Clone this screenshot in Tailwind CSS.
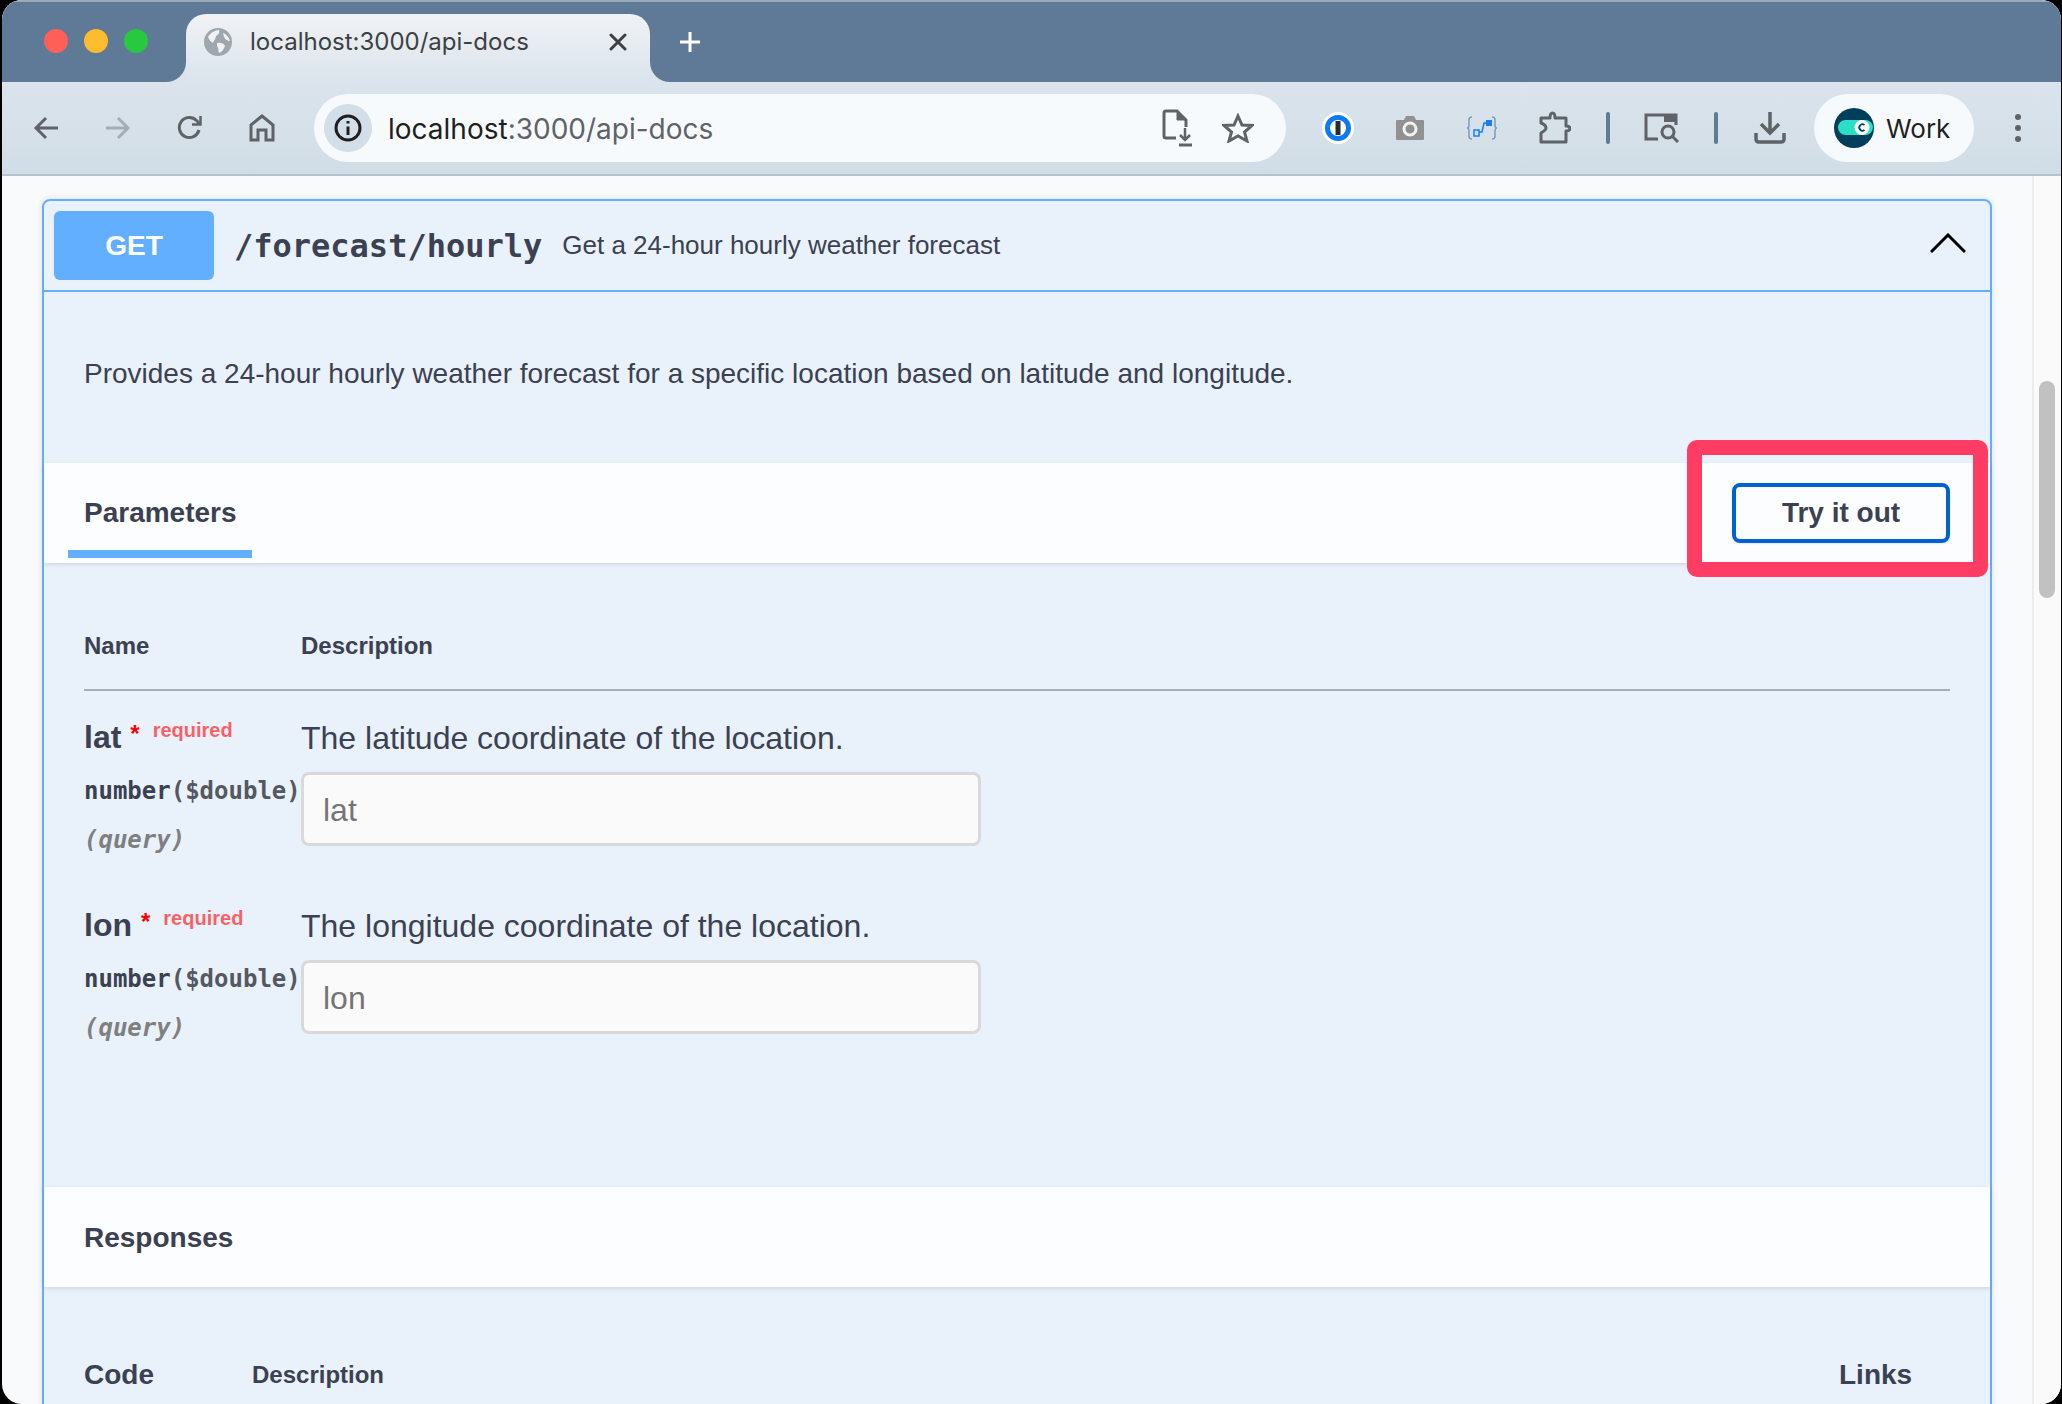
<!DOCTYPE html>
<html lang="en">
<head>
  <meta charset="UTF-8">
  <title>localhost:3000/api-docs</title>
  <script src="https://cdn.jsdelivr.net/npm/@tailwindcss/browser@4"></script>
</head>
<body class="bg-black w-[2062px] h-[1404px] overflow-hidden font-['Liberation_Sans',sans-serif] text-[#3b4151]">
  <div class="ml-[2px] mr-px h-[1404px] rounded-t-[20px] rounded-b-[20px] overflow-hidden flex flex-col bg-[#f9fafc]">

    <!-- tab strip -->
    <div class="h-[82px] flex shrink-0 bg-[#dbe4ec] font-['Inter',sans-serif]">
      <div class="w-[184px] bg-[#5f7a96] border-t-2 border-[#9aa9b8] rounded-br-[20px] flex items-start pt-[27px] pl-[42px] gap-[16px]">
        <span class="w-6 h-6 rounded-full bg-[#ff5f57]"></span>
        <span class="w-6 h-6 rounded-full bg-[#febc2e]"></span>
        <span class="w-6 h-6 rounded-full bg-[#28c840]"></span>
      </div>
      <div class="w-[464px] bg-[#5f7a96] border-t-2 border-[#9aa9b8] pt-[12px]">
        <div class="h-[68px] rounded-t-[20px] bg-linear-to-b from-[#f0f2f5] to-[#dbe4ec] flex items-start pt-[14px] pl-[18px]">
          <svg width="28" height="28" viewBox="0 0 28 28" class="shrink-0">
            <circle cx="14" cy="14" r="14" fill="#a0a6ad"/>
            <path d="M4 9 C7 4 12 2 15 2 C16 5 14 7 12 8 C12 11 9 13 9 15 C7 14 5 12 4 9Z M13 15 C16 14 20 15 21 18 C20 21 18 24 15 25 C14 22 15 20 13 18Z M19 5 C22 6 25 9 26 13 C23 13 20 11 19 5Z" fill="#f0f2f5"/>
          </svg>
          <span class="ml-[18px] text-[24px] leading-[28px] text-[#3c4043]">localhost:3000/api-docs</span>
          <svg width="18" height="18" viewBox="0 0 18 18" class="ml-auto mr-[23px] mt-[5px]">
            <path d="M2 2 L16 16 M16 2 L2 16" stroke="#3c4043" stroke-width="3" stroke-linecap="round"/>
          </svg>
        </div>
      </div>
      <div class="flex-1 bg-[#5f7a96] border-t-2 border-[#9aa9b8] rounded-bl-[20px] pl-[30px] pt-[30px]">
        <svg width="20" height="20" viewBox="0 0 20 20">
          <path d="M10 0 V20 M0 10 H20" stroke="#ffffff" stroke-width="3"/>
        </svg>
      </div>
    </div>

    <!-- toolbar -->
    <div class="h-[94px] shrink-0 flex items-center pl-[8px] bg-linear-to-b from-[#dbe4ec] to-[#d1dde6] border-b-2 border-[#b5c1cb] font-['Inter',sans-serif]">
      <div class="w-[72px] flex justify-center">
        <svg width="26" height="24" viewBox="0 0 26 24" fill="none" stroke="#5f6368" stroke-width="3"><path d="M25 12 H3 M13 2 L3 12 L13 22"/></svg>
      </div>
      <div class="w-[72px] flex justify-center">
        <svg width="26" height="24" viewBox="0 0 26 24" fill="none" stroke="#a4adb6" stroke-width="3"><path d="M1 12 H23 M13 2 L23 12 L13 22"/></svg>
      </div>
      <div class="w-[72px] flex justify-center">
        <svg width="26" height="26" viewBox="0 0 26 26" fill="none" stroke="#5f6368" stroke-width="3"><path d="M22 15 A10 10 0 1 1 19.5 5.5 L23 9"/><path d="M23.5 1 V9.5 H15" stroke-width="2.5"/></svg>
      </div>
      <div class="w-[72px] flex justify-center">
        <svg width="26" height="28" viewBox="0 0 26 28" fill="none" stroke="#5f6368" stroke-width="3"><path d="M2 26 V11 L13 2 L24 11 V26 H17 V16 H9 V26 Z"/></svg>
      </div>

      <div class="ml-[16px] w-[972px] h-[68px] rounded-full bg-[#f7fafc] flex items-center pl-[10px]">
        <div class="w-[48px] h-[48px] rounded-full bg-[#d3dfe8] flex items-center justify-center shrink-0">
          <svg width="28" height="28" viewBox="0 0 28 28" fill="none" stroke="#1f1f1f" stroke-width="3">
            <circle cx="14" cy="14" r="12"/><path d="M14 12.5 V21" /><path d="M14 7 V9.5"/>
          </svg>
        </div>
        <span class="ml-[16px] mt-px text-[28px] leading-[34px] text-[#1f1f1f]">localhost<span class="text-[#5f6368]">:3000/api-docs</span></span>
        <svg width="32" height="38" viewBox="0 0 32 38" class="ml-auto translate-x-[2px]" fill="none" stroke="#5f6368" stroke-width="3">
          <path d="M14 29 H4 Q2 29 2 27 V4 Q2 2 4 2 H15 L24 11 V18"/>
          <path d="M15 2 L24 11 H15 Z" fill="#5f6368" stroke-width="1"/>
          <path d="M23 19 V30 M18 26 L23 31 L28 26" stroke-width="2.5"/>
          <path d="M17 36 H30" stroke-width="3"/>
        </svg>
        <svg width="32" height="30" viewBox="0 0 32 30" class="ml-[30px] mr-[32px]" fill="none" stroke="#5f6368" stroke-width="3" stroke-linejoin="miter">
          <path d="M16 3 L20 12 L30 12.5 L22.5 19 L25 28 L16 23 L7 28 L9.5 19 L2 12.5 L12 12 Z"/>
        </svg>
      </div>

      <div class="ml-[16px] w-[72px] flex justify-center">
        <svg width="32" height="32" viewBox="0 0 32 32">
          <circle cx="16" cy="16" r="16" fill="#ffffff"/>
          <circle cx="16" cy="16" r="10.5" fill="#ffffff" stroke="#0a7bf5" stroke-width="5"/>
          <rect x="13.5" y="9" width="5" height="14" fill="#2b2b2b"/>
        </svg>
      </div>
      <div class="w-[72px] flex justify-center">
        <svg width="30" height="26" viewBox="0 0 30 26">
          <path d="M2 5 H9 L11 1 H19 L21 5 H28 Q29 5 29 6 V24 Q29 25 28 25 H2 Q1 25 1 24 V6 Q1 5 2 5Z" fill="#919191"/>
          <circle cx="15" cy="14" r="6" fill="none" stroke="#f1f3f4" stroke-width="3"/>
        </svg>
      </div>
      <div class="w-[72px] flex justify-center">
        <svg width="32" height="24" viewBox="0 0 32 24" fill="none">
          <path d="M6 1 Q3 1 3 4 V9 Q3 12 1 12 Q3 12 3 15 V20 Q3 23 6 23 M26 1 Q29 1 29 4 V9 Q29 12 31 12 Q29 12 29 15 V20 Q29 23 26 23" stroke="#7c9cc0" stroke-width="1.5"/>
          <rect x="8" y="14" width="5" height="6" stroke="#1a7cf0" stroke-width="1.5"/>
          <path d="M13 16 H16 L18 7 H21" stroke="#1a7cf0" stroke-width="1.5"/>
          <rect x="20" y="4" width="6" height="6" fill="#1a7cf0"/>
        </svg>
      </div>
      <div class="w-[72px] flex justify-center">
        <svg width="34" height="34" viewBox="0 0 34 34" fill="none" stroke="#5f6368" stroke-width="3">
          <path d="M4 7 H13 Q13 2 15.5 2 Q18 2 18 7 H29 V15 Q33 15 33 17.5 Q33 20 29 20 V31 H4 V22 Q9 19 9 17 Q9 14 4 12 Z" stroke-linejoin="round"/>
        </svg>
      </div>
      <div class="w-[36px] flex justify-center"><span class="block w-1 h-8 rounded-full bg-[#5f7a96]"></span></div>
      <div class="w-[72px] flex justify-center">
        <svg width="36" height="30" viewBox="0 0 36 30" fill="none" stroke="#5f6368" stroke-width="3">
          <path d="M14 26 H2 V2 H32 V12"/>
          <path d="M20 1 H33 V9 H20 Z" fill="#5f6368" stroke="none"/>
          <circle cx="24" cy="19" r="6"/>
          <path d="M28 23 L34 29"/>
        </svg>
      </div>
      <div class="w-[36px] flex justify-center"><span class="block w-1 h-8 rounded-full bg-[#5f7a96]"></span></div>
      <div class="w-[72px] flex justify-center">
        <svg width="32" height="32" viewBox="0 0 32 32" fill="none" stroke="#5f6368" stroke-width="3.5">
          <path d="M16 0 V20 M7 12 L16 21 L25 12"/>
          <path d="M2 21 V27 Q2 30 5 30 H27 Q30 30 30 27 V21"/>
        </svg>
      </div>

      <div class="ml-[8px] w-[160px] h-[68px] rounded-full bg-[#f7fafc] flex items-center pl-[20px]">
        <svg width="40" height="40" viewBox="0 0 40 40" class="shrink-0">
          <circle cx="20" cy="20" r="20" fill="#003e5c"/>
          <rect x="4" y="12" width="35" height="15" rx="7.5" fill="#29e0c6"/>
          <circle cx="28" cy="19.5" r="7.5" fill="#ffffff"/>
          <path d="M30.5 17 A3.2 3.2 0 1 0 30.5 22" fill="none" stroke="#003e5c" stroke-width="1.8"/>
        </svg>
        <span class="ml-[12px] mt-[2px] text-[26px] leading-[32px] text-[#1f1f1f]">Work</span>
      </div>
      <div class="ml-[41px] w-[6px] flex flex-col gap-[5px]">
        <span class="w-[6px] h-[6px] rounded-full bg-[#5f6368]"></span>
        <span class="w-[6px] h-[6px] rounded-full bg-[#5f6368]"></span>
        <span class="w-[6px] h-[6px] rounded-full bg-[#5f6368]"></span>
      </div>
    </div>

    <!-- page -->
    <div class="flex-1 min-h-0 flex">
      <div class="flex-1 min-w-0 pt-[23px] pl-[40px] pr-[40px] overflow-hidden">
        <div class="h-[1300px] rounded-t-[8px] border-2 border-[#61affe] bg-[#e9f1fb] shadow-[0_0_6px_rgba(0,0,0,0.12)]">

          <div class="h-[91px] flex items-center border-b-2 border-[#61affe]">
            <div class="ml-[10px] w-[160px] h-[69px] rounded-[6px] bg-[#61affe] flex items-center justify-center text-white text-[28px] font-bold">GET</div>
            <span class="ml-[20px] text-[32px] font-bold font-['DejaVu_Sans_Mono',monospace]">/forecast/hourly</span>
            <span class="ml-[20px] text-[26px]">Get a 24-hour hourly weather forecast</span>
            <svg width="36" height="20" viewBox="0 0 36 20" class="ml-auto mr-[24px] -mt-[6px]" fill="none" stroke="#000000" stroke-width="3">
              <path d="M1 19 L18 2 L35 19"/>
            </svg>
          </div>

          <div class="px-[40px] pt-[62px] pb-[69px]">
            <p class="text-[28px] leading-[40px]">Provides a 24-hour hourly weather forecast for a specific location based on latitude and longitude.</p>
          </div>

          <div class="relative h-[100px] flex justify-between bg-[#fbfdfe] shadow-[0_2px_4px_rgba(0,0,0,0.1)]">
            <div class="ml-[24px] w-[184px] h-[95px] pl-[16px] border-b-8 border-[#61affe] text-[28px] font-bold flex items-center pt-[12px]">Parameters</div>
            <button class="self-center mr-[40px] w-[218px] h-[60px] rounded-[8px] border-4 border-[#0062d1] text-[28px] font-bold bg-transparent shadow-[0_1px_2px_rgba(0,0,0,0.1)]">Try it out</button>
            <div class="absolute -top-[23px] right-[2px] w-[301px] h-[137px] rounded-[10px] border-[15px] border-[#ff3c64]"></div>
          </div>

          <div class="px-[40px]">
            <div class="pt-[65px] h-[128px] flex border-b-2 border-[#a6acb8] text-[24px] leading-[36px] font-bold">
              <div class="w-[217px]">Name</div>
              <div>Description</div>
            </div>

            <div class="h-[188px] pt-[26px] flex">
              <div class="w-[217px] shrink-0">
                <div class="flex items-start h-[40px]">
                  <span class="text-[32px] leading-[40px] font-bold">lat</span>
                  <span class="ml-[9px] mt-[3px] text-[24px] leading-[28px] font-bold text-[#ff0000]">*</span>
                  <span class="ml-[13px] text-[20px] leading-[26px] font-bold text-[#ff0000]/60">required</span>
                </div>
                <div class="mt-[16px] text-[24px] leading-[36px] font-bold font-['DejaVu_Sans_Mono',monospace] whitespace-nowrap">number<span class="text-[#55585f]">($double)</span></div>
                <div class="mt-[13px] text-[24px] leading-[36px] font-bold italic text-[#7f7f7f] font-['DejaVu_Sans_Mono',monospace]">(query)</div>
              </div>
              <div>
                <p class="mt-px text-[32px] leading-[40px]">The latitude coordinate of the location.</p>
                <input placeholder="lat" class="mt-[14px] w-[680px] h-[74px] rounded-[8px] border-[3px] border-[#d9d9d9] bg-[#fafafa] pl-[19px] pt-[2px] text-[32px] placeholder:text-[#757575]">
              </div>
            </div>

            <div class="h-[188px] pt-[26px] flex">
              <div class="w-[217px] shrink-0">
                <div class="flex items-start h-[40px]">
                  <span class="text-[32px] leading-[40px] font-bold">lon</span>
                  <span class="ml-[9px] mt-[3px] text-[24px] leading-[28px] font-bold text-[#ff0000]">*</span>
                  <span class="ml-[13px] text-[20px] leading-[26px] font-bold text-[#ff0000]/60">required</span>
                </div>
                <div class="mt-[16px] text-[24px] leading-[36px] font-bold font-['DejaVu_Sans_Mono',monospace] whitespace-nowrap">number<span class="text-[#55585f]">($double)</span></div>
                <div class="mt-[13px] text-[24px] leading-[36px] font-bold italic text-[#7f7f7f] font-['DejaVu_Sans_Mono',monospace]">(query)</div>
              </div>
              <div>
                <p class="mt-px text-[32px] leading-[40px]">The longitude coordinate of the location.</p>
                <input placeholder="lon" class="mt-[14px] w-[680px] h-[74px] rounded-[8px] border-[3px] border-[#d9d9d9] bg-[#fafafa] pl-[19px] pt-[2px] text-[32px] placeholder:text-[#757575]">
              </div>
            </div>
          </div>

          <div class="mt-[120px] h-[100px] px-[40px] pt-[2px] flex items-center bg-[#fbfdfe] shadow-[0_2px_4px_rgba(0,0,0,0.1)] text-[28px] font-bold">Responses</div>

          <div class="px-[40px] pt-[68px] flex items-center h-[134px] pb-[26px] font-bold">
            <div class="w-[168px] text-[28px] leading-[40px]">Code</div>
            <div class="text-[24px] leading-[40px]">Description</div>
            <div class="ml-auto w-[111px] text-[28px] leading-[40px]">Links</div>
          </div>
        </div>
      </div>

      <!-- scrollbar -->
      <div class="w-[29px] shrink-0 border-l-2 border-[#ececec] bg-[#fafafa] pl-[5px] pt-[205px]">
        <div class="w-4 h-[217px] rounded-full bg-[#c1c1c1]"></div>
      </div>
    </div>
  </div>
</body>
</html>
